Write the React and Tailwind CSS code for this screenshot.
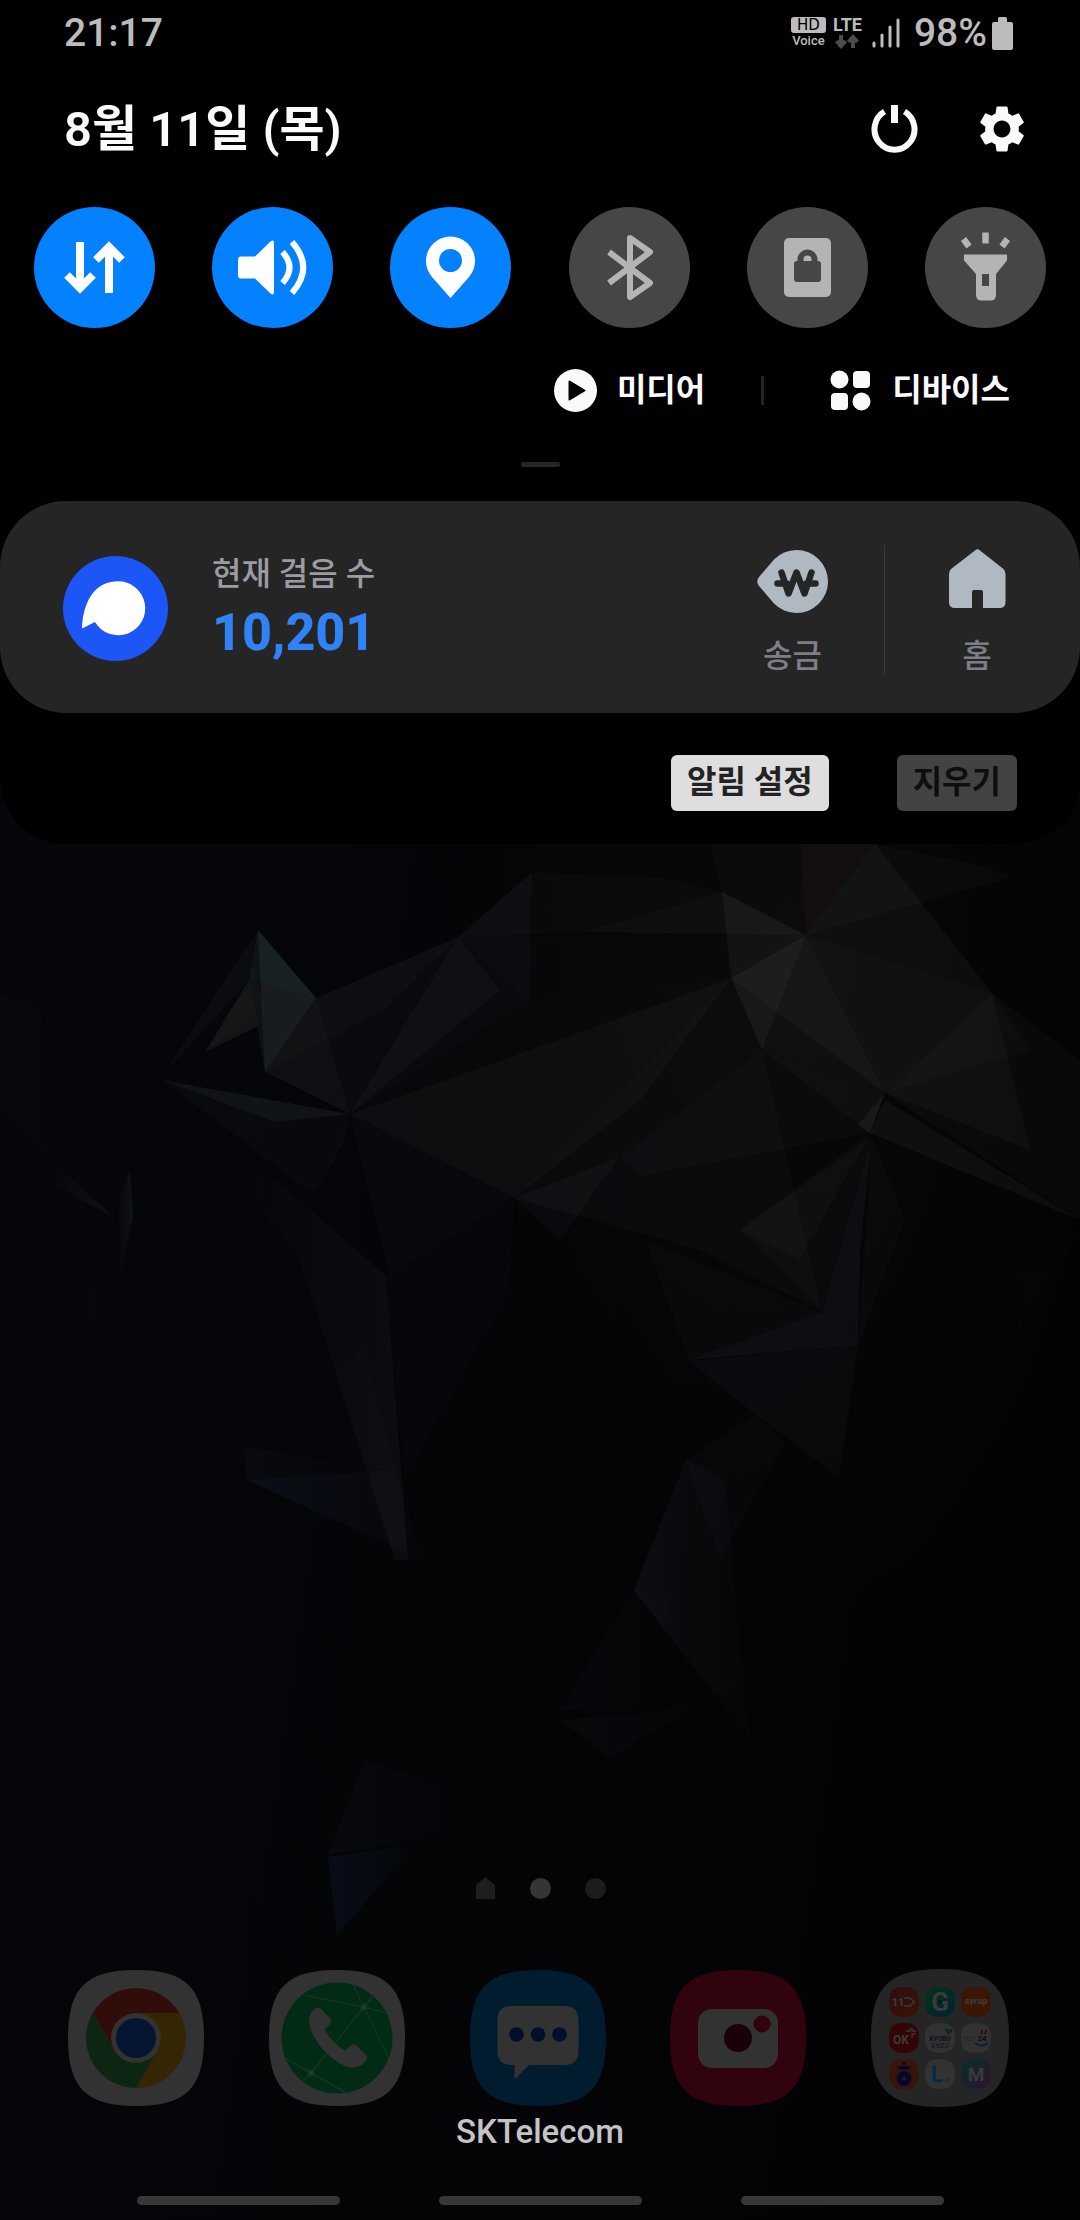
import React from "react";
import { MdSettings } from "react-icons/md";

const SQUIRCLE = "M68 0C119 0 136 19 136 68S119 136 68 136 0 117 0 68 17 0 68 0z";

/* Faceted low-poly background: [points, fill, opacity] in a 1080x2220 space */
const FACETS = [
  ["258,930 316,998 265,1072", "#5a7f88", 0.14],
  ["258,930 249,980 316,998", "#6f9296", 0.12],
  ["249,980 316,998 265,1072 258,1030", "#8a8a80", 0.1],
  ["258,930 162,1076 249,980", "#6c7c86", 0.06],
  ["249,980 205,1052 258,1026", "#9a968a", 0.12],
  ["316,998 458,937 350,1114 265,1072", "#7d8488", 0.06],
  ["316,998 458,937 385,1010 265,1072", "#8c8c80", 0.04],
  ["458,937 532,872 530,1000 350,1114", "#7a8694", 0.05],
  ["532,872 665,878 722,892 582,932 458,937", "#6e757e", 0.05],
  ["458,937 806,935 731,978 530,1000", "#5d646e", 0.04],
  ["582,932 722,892 806,935", "#8e8a84", 0.08],
  ["722,892 806,935 762,1050 731,978", "#b0a692", 0.08],
  ["806,935 731,978 762,1050", "#c0b6a4", 0.05],
  ["806,935 885,1093 762,1050", "#a89f88", 0.07],
  ["806,935 731,978 885,1093", "#b8ae98", 0.05],
  ["806,935 875,844 992,993 885,1093", "#8d866f", 0.08],
  ["800,844 875,844 806,935", "#8a6a42", 0.1],
  ["710,844 800,844 806,935 722,892", "#6f7070", 0.05],
  ["875,844 980,865 1013,877 806,935", "#6c7468", 0.06],
  ["806,935 992,993 1030,1050 885,1093", "#777a74", 0.04],
  ["992,993 1080,1060 1080,1220 885,1093", "#7a8088", 0.06],
  ["992,993 1030,1150 885,1093", "#96948c", 0.05],
  ["350,1114 731,978 640,1100 514,1198", "#8b8a80", 0.06],
  ["731,978 762,1050 619,1157 514,1198", "#8b8a80", 0.06],
  ["350,1114 530,1000 731,978", "#7b8288", 0.04],
  ["350,1114 731,978 514,1198", "#80858c", 0.04],
  ["350,1114 458,937 500,990", "#8a9494", 0.06],
  ["162,1080 350,1114 275,1122", "#6d8a90", 0.09],
  ["162,1080 350,1114 314,1195", "#5d6a70", 0.06],
  ["265,1072 316,998 350,1114", "#7f7c70", 0.05],
  ["350,1114 314,1195 345,1140", "#8d9096", 0.06],
  ["350,1114 514,1198 390,1275", "#6b7078", 0.05],
  ["514,1198 390,1275 386,1276 405,1480 510,1290", "#6b7078", 0.03],
  ["619,1157 762,1050 822,1312", "#70757e", 0.05],
  ["514,1198 619,1157 560,1240", "#8a90a0", 0.06],
  ["514,1198 619,1157 822,1312 700,1250", "#7d8290", 0.05],
  ["619,1157 762,1050 870,1133 640,1176", "#767b84", 0.05],
  ["762,1050 885,1093 870,1133", "#a08f70", 0.08],
  ["885,1093 870,1133 858,1125", "#b7b4ac", 0.08],
  ["870,1133 885,1100 1080,1220", "#9a8660", 0.09],
  ["870,1133 800,1260 740,1230", "#8a8474", 0.05],
  ["872,1137 822,1312 858,1345 860,1250", "#8c90a2", 0.08],
  ["872,1137 822,1312 740,1230", "#73767e", 0.05],
  ["872,1137 905,1220 858,1345", "#73767e", 0.05],
  ["822,1312 858,1345 689,1360", "#9298a6", 0.08],
  ["689,1361 858,1345 755,1414", "#5f7390", 0.07],
  ["755,1414 858,1345 839,1478", "#6f7785", 0.06],
  ["645,1240 705,1265 822,1312 689,1360", "#696e7a", 0.05],
  ["755,1414 785,1442 720,1560 686,1460", "#646a78", 0.05],
];

/* Facets that dissolve towards the right edge */
const FADING = [
  ["686,1460 634,1590 750,1740 725,1480", "#7c8496", 0.09],
  ["634,1590 560,1710 640,1712 670,1600", "#5f6678", 0.05],
  ["560,1720 610,1758 755,1670 660,1712", "#5f6678", 0.06],
  ["243,1446 247,1480 380,1470", "#6d7b92", 0.05],
  ["247,1480 422,1560 395,1470", "#46629a", 0.12],
  ["365,1760 328,1855 450,1832 455,1790", "#5a6478", 0.06],
  ["328,1857 415,1845 337,1935", "#26488c", 0.14],
  ["0,995 36,1005 120,1220 0,1110", "#5a6a78", 0.03],
];

/* Facets that dissolve towards the left edge */
const RISING = [
  ["162,1080 386,1276 408,1560 395,1560 300,1260", "#7d848e", 0.08],
  ["243,1446 365,1350 395,1470", "#5f6878", 0.03],
  ["30,1140 112,1216 28,1172", "#507a90", 0.12],
  ["112,1216 130,1170 133,1216 119,1281", "#7a94a0", 0.1],
  ["110,870 225,875 265,1010 162,1080 120,1220", "#5c6470", 0.03],
  ["1080,1232 960,1420 858,1345", "#5c6068", 0.03],
  ["119,1281 0,1310 0,1350 80,1350", "#5c6470", 0.03],
];

function Wallpaper() {
  return (
    <svg className="absolute inset-0 h-full w-full" viewBox="0 0 1080 2220" preserveAspectRatio="xMidYMid slice" aria-hidden="true">
      <defs>
        <linearGradient id="base" x1="0" x2="1" y1="0" y2="0.3">
          <stop offset="0" stopColor="#06070b" />
          <stop offset="1" stopColor="#030305" />
        </linearGradient>
        <radialGradient id="glow" cx="0.74" cy="0.44" r="0.3">
          <stop offset="0" stopColor="#8a7f6c" stopOpacity="0.03" />
          <stop offset="1" stopColor="#8a7f6c" stopOpacity="0" />
        </radialGradient>
        {FADING.map(([, fill, opacity], i) => (
          <linearGradient key={i} id={`fade${i}`}>
            <stop offset="0" stopColor={fill} stopOpacity={opacity} />
            <stop offset="1" stopColor={fill} stopOpacity={opacity / 5} />
          </linearGradient>
        ))}
        {RISING.map(([, fill, opacity], i) => (
          <linearGradient key={i} id={`rise${i}`}>
            <stop offset="0.2" stopColor={fill} stopOpacity="0" />
            <stop offset="1" stopColor={fill} stopOpacity={opacity} />
          </linearGradient>
        ))}
      </defs>
      <rect width="1080" height="2220" fill="url(#base)" />
      <rect width="1080" height="2220" fill="url(#glow)" />
      <g opacity="0.85">
        {FACETS.map(([points, fill, opacity]) => (
          <polygon key={points} points={points} fill={fill} fillOpacity={opacity} />
        ))}
        {FADING.map(([points], i) => (
          <polygon key={points} points={points} fill={`url(#fade${i})`} />
        ))}
        {RISING.map(([points], i) => (
          <polygon key={points} points={points} fill={`url(#rise${i})`} />
        ))}
      </g>
    </svg>
  );
}

function StatusBar() {
  return (
    <header className="flex items-center justify-between pt-3 pr-[67px] pl-16 text-[#bcbcbc]">
      <span className="text-[39px] leading-[42px] font-medium">21:17</span>
      <div className="flex items-center">
        <div className="flex flex-col items-center">
          <span className="w-[35px] rounded-[3px] bg-[#bcbcbc] text-center font-['DejaVu_Sans'] text-[15px] leading-[16px] text-black">HD</span>
          <span className="text-[13px] leading-[16px] font-medium">Voice</span>
        </div>
        <div className="ml-[7px] flex flex-col items-center">
          <span className="text-[18px] leading-[16px] font-bold">LTE</span>
          <svg width="24" height="16" viewBox="0 0 24 16" fill="none" stroke="#4c4c4c" strokeWidth="4" aria-hidden="true">
            <path d="M6 2v11M1.500 8l4.500 5 4.500-5M18 15V4M13.500 9l4.500-5 4.500 5" />
          </svg>
        </div>
        <svg className="ml-[10px]" width="28" height="32" viewBox="0 0 28 32" stroke="#bcbcbc" strokeWidth="3" strokeLinecap="round" aria-hidden="true">
          <path d="M2 26v3M10 18v11M18 10v19M26 3v26" />
        </svg>
        <span className="ml-[14px] text-[39px] leading-[42px] font-medium">98%</span>
        <svg className="ml-[5px]" width="21" height="33" viewBox="0 0 21 33" fill="#bcbcbc" aria-label="배터리" role="img">
          <path d="M6 1.500Q6 0 7.500 0h6Q15 0 15 1.500V5h4q2 0 2 2v24q0 2-2 2H2q-2 0-2-2V7q0-2 2-2h4z" />
        </svg>
      </div>
    </header>
  );
}

const TOGGLES = [
  {
    name: "모바일 데이터",
    on: true,
    icon: (
      <path d="M46 35v46M33 68l13 13 13-13M75 86V40M62 53l13-13 13 13" fill="none" stroke="white" strokeWidth="8" />
    ),
  },
  {
    name: "소리",
    on: true,
    icon: (
      <>
        <path d="M29 49.500h14L58.500 34.500Q62 32 62 36v49q0 4-3.500 1.500L43 71.500H29q-3 0-3-3v-16q0-3 3-3z" fill="white" />
        <path d="M70.500 45Q84.500 60.500 70.500 76M80 35Q102.500 60.500 80 86" fill="none" stroke="white" strokeWidth="6" />
      </>
    ),
  },
  {
    name: "위치",
    on: true,
    icon: (
      <path fillRule="evenodd" fill="white" d="M60.500 91L42 70A24.500 24.500 0 1 1 79 70zM60.500 42a11.500 11.500 0 1 0 0 23 11.500 11.500 0 0 0 0-23z" />
    ),
  },
  {
    name: "블루투스",
    on: false,
    icon: (
      <path d="M40 45L81 76 61 90V31L81 45 40 76" fill="none" stroke="#b4b4b4" strokeWidth="6" strokeLinejoin="round" />
    ),
  },
  {
    name: "화면 회전 잠금",
    on: false,
    icon: (
      <>
        <rect x="37" y="31" width="47" height="59" rx="5" fill="#b4b4b4" />
        <rect x="47" y="54" width="27" height="21" rx="3" fill="#464646" />
        <path d="M53.500 56v-3.500a7 7 0 0 1 14 0V56" fill="none" stroke="#464646" strokeWidth="6" />
      </>
    ),
  },
  {
    name: "손전등",
    on: false,
    icon: (
      <>
        <path fillRule="evenodd" fill="#b4b4b4" d="M39 47.500h43v6L71 67v21q0 5.500-5.500 5.500h-9q-5.500 0-5.500-5.500V67L39 53.500zM57 67v12h7V67z" />
        <path d="M60.500 25.500v11M38.500 32l5.500 7.500M82.500 32L77 39.500" stroke="#b4b4b4" strokeWidth="6.500" />
      </>
    ),
  },
];

function QuickToggle({ name, on, icon }) {
  return (
    <button type="button" aria-label={name} aria-pressed={on} className={on ? "rounded-full bg-[#0381fe]" : "rounded-full bg-[#464646]"}>
      <svg width="121" height="121" viewBox="0 0 121 121" aria-hidden="true">{icon}</svg>
    </button>
  );
}

function QuickPanel() {
  return (
    <section className="text-[#fafafa]">
      <div className="flex items-center justify-between pt-[38px] pr-[50px] pl-16">
        <h1 className="pt-[2px] text-[49px] leading-[72px] font-semibold">8월 11일 (목)</h1>
        <div className="flex items-center gap-[56px]">
          <button type="button" aria-label="전원">
            <svg width="47" height="48" viewBox="0 0 47 48" fill="none" stroke="currentColor" strokeWidth="6" aria-hidden="true">
              <path d="M13.500 6.500A20 20.500 0 1 0 33.500 6.500" />
              <path d="M23.500 0v18" strokeWidth="7" />
            </svg>
          </button>
          <button type="button" aria-label="설정">
            <MdSettings size={56} />
          </button>
        </div>
      </div>
      <div className="flex justify-between px-[34px] pt-[41px]">
        {TOGGLES.map((t) => (
          <QuickToggle key={t.name} {...t} />
        ))}
      </div>
      <div className="flex items-center justify-end pt-10 pr-[70px] text-[32px] leading-[44px] font-semibold">
        <button type="button" className="flex items-center gap-5">
          <svg width="43" height="43" viewBox="0 0 43 43" aria-hidden="true">
            <circle cx="21.500" cy="21.500" r="21.500" fill="#fafafa" />
            <path d="M15.500 12.500v18L30.500 21.500z" fill="#000" stroke="#000" strokeWidth="2" strokeLinejoin="round" />
          </svg>
          미디어
        </button>
        <span className="mr-[66px] ml-[56px] h-[29px] w-[3px] bg-[#242424]" />
        <button type="button" className="flex items-center gap-[21px]">
          <svg width="41" height="41" viewBox="0 0 41 41" fill="#fafafa" aria-hidden="true">
            <circle cx="9.500" cy="9.500" r="9" />
            <rect x="23" y="1" width="17" height="17" rx="4" />
            <rect x="1" y="23" width="17" height="17" rx="4" />
            <circle cx="31.500" cy="31.500" r="9" />
          </svg>
          디바이스
        </button>
      </div>
      <div className="flex justify-center pt-[50px] pb-[34px]">
        <span className="h-[5px] w-[39px] rounded-full bg-[#262626]" />
      </div>
    </section>
  );
}

function Notification() {
  return (
    <article className="flex items-start rounded-[66px] bg-[#252525] pt-11 pr-[11px] pb-[38px] pl-[63px]">
      <svg className="mt-[11px]" width="105" height="105" viewBox="0 0 105 105" aria-hidden="true">
        <circle cx="52.500" cy="52.500" r="52.500" fill="#1c56f6" />
        <path fill="white" d="M54 25.300A27 27 0 1 1 32 66L19 72.500C20 48 30 26 54 25.300z" />
      </svg>
      <div className="ml-11 flex-1 pt-[10px]">
        <p className="text-[32px] leading-[38px] font-medium text-[#9c9ba2]">현재 걸음 수</p>
        <p className="mt-[9px] text-[52px] leading-[62px] font-extrabold text-[#3182f6]">10,201</p>
      </div>
      <button type="button" className="flex w-[184px] flex-col items-center border-r border-[#3b3b3f] pt-[5px] text-[32px] leading-[38px] font-medium text-[#7e7e87]">
        <svg width="72" height="63" viewBox="0 0 72 63" aria-hidden="true">
          <path fill="#b0b8c1" d="M2 27L17 9.500A31.500 31.500 0 1 1 17 53.500L2 36Q-1.500 31.500 2 27z" />
          <path d="M24.500 22.500l7 21 8-21 8 21 7-21M20.500 33.500h9M49.500 33.500h9" fill="none" stroke="#252525" strokeWidth="6.500" strokeLinecap="round" strokeLinejoin="round" />
        </svg>
        <span className="mt-6">송금</span>
      </button>
      <button type="button" className="flex w-[184px] flex-col items-center pt-[4px] text-[32px] leading-[38px] font-medium text-[#7e7e87]">
        <svg width="57" height="64" viewBox="0 0 57 64" aria-hidden="true">
          <path fill="#b0b8c1" d="M26 1.500q2.500-2.500 5 0L54.500 20q2 2 2 5v28q0 6-6 6H34V43q0-2-2-2h-7q-2 0-2 2v16H6q-6 0-6-6V25q0-3 2-5z" />
        </svg>
        <span className="mt-6">홈</span>
      </button>
    </article>
  );
}

function PanelActions() {
  return (
    <div className="flex justify-end gap-[68px] pt-[42px] pr-[63px] pb-[33px] text-[32px] leading-[40px] font-bold">
      <button type="button" className="rounded-[6px] bg-[#dedede] px-4 pt-[7px] pb-[9px] text-[#222222]">알림 설정</button>
      <button type="button" className="rounded-[6px] bg-[#434343] px-4 pt-[7px] pb-[9px] text-[#0e0e0e]">지우기</button>
    </div>
  );
}

function ChromeIcon() {
  return (
    <>
      <path d={SQUIRCLE} fill="#323232" />
      <path fill="#310d0a" d="M24.700 43A50 50 0 0 1 111.300 43H68L46.300 80.500z" />
      <path fill="#342503" d="M68 43H111.300A50 50 0 0 1 68 118L89.600 80.500z" />
      <path fill="#0d2613" d="M24.700 43L46.300 80.500 68 84 89.600 80.500 68 118A50 50 0 0 1 24.700 43z" />
      <circle cx="68" cy="68" r="25" fill="#323232" />
      <circle cx="68" cy="68" r="20" fill="#051633" />
    </>
  );
}

function PhoneIcon() {
  return (
    <>
      <path d={SQUIRCLE} fill="#323232" />
      <circle cx="68" cy="68" r="55.500" fill="#022b16" />
      <g stroke="#143422" strokeWidth="1.500" fill="#1f3d2c">
        <path d="M34 25l61 12 22 6M95 37L84 14M95 37l10-12M95 37L42 103l-9 9M95 37l24 50M42 103L16 88M42 103l34 19" fill="none" />
        <circle cx="95" cy="37" r="3" />
        <circle cx="42" cy="103" r="3" />
      </g>
      <path fill="#323232" d="M45.500 39Q49 36 52.500 39.500L62 49.500Q63 52 60.500 54.500L56 59.500C59 67 68 76 76 80.500L82 75.500Q85 73.500 88 76L97 84.500Q99 87 97.500 89.500C93 98 83 99 75 95.500 59 88 41 68 40 51Q40 43 45.500 39z" />
    </>
  );
}

function MessageIcon() {
  return (
    <>
      <path d={SQUIRCLE} fill="#011c2e" />
      <path fill="#323232" d="M41.500 36h53Q108.500 36 108.500 50v31Q108.500 95 94.500 95H59L44.500 109.500V95h-3Q27.500 95 27.500 81V50Q27.500 36 41.500 36z" />
      <g fill="#01102a">
        <circle cx="46.500" cy="64.500" r="7.300" />
        <circle cx="68" cy="64.500" r="7.300" />
        <circle cx="89.500" cy="64.500" r="7.300" />
      </g>
    </>
  );
}

function CameraIcon() {
  return (
    <>
      <path d={SQUIRCLE} fill="#30030f" />
      <rect x="28" y="39" width="80" height="59" rx="14" fill="#323232" />
      <circle cx="68" cy="68" r="14" fill="#1a0007" />
      <circle cx="92" cy="54" r="8.500" fill="#30030f" />
    </>
  );
}

function MiniApp({ col, row, fill, children }) {
  return (
    <g transform={`translate(${18 + col * 36} ${18 + row * 36})`}>
      <path d={SQUIRCLE} transform="scale(0.22)" fill={fill} />
      {children}
    </g>
  );
}

function FolderIcon() {
  return (
    <g fontFamily="Roboto, sans-serif" fontWeight="700" textAnchor="middle">
      <defs>
        <linearGradient id="mint" x1="0" x2="1" y1="0" y2="1">
          <stop offset="0.2" stopColor="#03301a" />
          <stop offset="1" stopColor="#012133" />
        </linearGradient>
        <linearGradient id="violet" x1="0" x2="1" y1="0" y2="1">
          <stop offset="0.2" stopColor="#0e2a2a" />
          <stop offset="1" stopColor="#2c1230" />
        </linearGradient>
        <linearGradient id="coral" x1="0" x2="1" y1="0" y2="1">
          <stop offset="0" stopColor="#300c14" />
          <stop offset="1" stopColor="#381404" />
        </linearGradient>
      </defs>
      <path d={SQUIRCLE} transform="scale(1.015)" fill="#252525" />
      <MiniApp col={0} row={0} fill="url(#coral)">
        <text x="9" y="19" fontSize="11" fill="#3a3a3a">11</text>
        <path d="M15 11h6l4.500 4-4.500 4h-6" fill="none" stroke="#3a3a3a" strokeWidth="1.500" />
      </MiniApp>
      <MiniApp col={1} row={0} fill="url(#mint)">
        <text x="15" y="24" fontSize="26" fill="#3a3a3a">G</text>
        <circle cx="15.500" cy="15" r="1.800" fill="#05102c" />
      </MiniApp>
      <MiniApp col={2} row={0} fill="#391704">
        <text x="15" y="17" fontSize="9" fill="#4a3a30">syrup</text>
      </MiniApp>
      <MiniApp col={0} row={1} fill="#330507">
        <text x="12" y="21" fontSize="12" fill="#3a3a3a">OK</text>
        <path d="M17 8h4V5M23 5v3h4M23 15v-4h4" fill="none" stroke="#3a3a3a" strokeWidth="1.300" />
      </MiniApp>
      <MiniApp col={1} row={1} fill="#323232">
        <text x="15" y="18" fontSize="6.500" fill="#0a1024">KYOBO</text>
        <text x="15" y="24" fontSize="5" fill="#15151a" fontFamily="'Noto Sans CJK KR', sans-serif">교보문고</text>
        <path d="M20 5q4 3 8 0-1 6-5 6-3-1-3-6z" fill="#0c2c12" />
      </MiniApp>
      <MiniApp col={2} row={1} fill="#323232">
        <text x="8" y="18" fontSize="6.500" fill="#242424" fontWeight="400">YES</text>
        <text x="21" y="18" fontSize="8" fill="#101014">24</text>
        <path d="M20 11l1-4M24 11l1-4" stroke="#34070a" strokeWidth="1.800" />
        <path d="M14 20q6 5 13 0" fill="none" stroke="#062038" strokeWidth="1.800" />
      </MiniApp>
      <MiniApp col={0} row={2} fill="#38150a">
        <circle cx="15" cy="19.500" r="7.500" fill="#06082a" />
        <path d="M8 7h14q-2 4-7 4t-7-4z" fill="#06082a" />
        <circle cx="15" cy="4.500" r="1.800" fill="#06082a" />
        <circle cx="15" cy="19.500" r="1.800" fill="#38150a" />
      </MiniApp>
      <MiniApp col={1} row={2} fill="#323232">
        <text x="12" y="23" fontSize="22" fill="#062a42">L</text>
        <circle cx="22" cy="21" r="2" fill="#33290a" />
      </MiniApp>
      <MiniApp col={2} row={2} fill="url(#violet)">
        <text x="15" y="22" fontSize="19" fill="#3a3a3a">M</text>
      </MiniApp>
    </g>
  );
}

const APPS = [
  ["Chrome", <ChromeIcon />],
  ["전화", <PhoneIcon />],
  ["메시지", <MessageIcon />],
  ["카메라", <CameraIcon />],
];

function Dock() {
  return (
    <footer className="mt-auto pb-[15px]">
      <div className="flex items-center justify-center gap-[34px]" aria-hidden="true">
        <svg width="21" height="22" viewBox="0 0 21 22">
          <path d="M1 8L10.500 0 20 8v14H1z" fill="#1e1e1e" />
        </svg>
        <span className="h-[21px] w-[21px] rounded-full bg-[#353535]" />
        <span className="h-[21px] w-[21px] rounded-full bg-[#1b1c1e]" />
      </div>
      <nav className="flex items-center justify-between pt-[70px] pr-[71px] pl-[68px]">
        {APPS.map(([name, icon]) => (
          <button type="button" key={name} aria-label={name}>
            <svg width="136" height="136" viewBox="0 0 136 136" aria-hidden="true">{icon}</svg>
          </button>
        ))}
        <button type="button" aria-label="쇼핑 폴더">
          <svg width="138" height="138" viewBox="0 0 138 138" aria-hidden="true">
            <FolderIcon />
          </svg>
        </button>
      </nav>
      <p className="pt-[5px] text-center text-[33px] leading-[40px] font-medium text-[#c4c4c6]">SKTelecom</p>
      <div className="flex justify-center gap-[99px] pt-[44px]">
        <button type="button" aria-label="최근 앱" className="h-[9px] w-[203px] rounded-full bg-[#373739]" />
        <button type="button" aria-label="홈 화면" className="h-[9px] w-[203px] rounded-full bg-[#373739]" />
        <button type="button" aria-label="뒤로" className="h-[9px] w-[203px] rounded-full bg-[#373739]" />
      </div>
    </footer>
  );
}

export default function App() {
  return (
    <div className="relative isolate min-h-screen font-[Roboto,'Noto_Sans_CJK_KR',sans-serif]">
      <Wallpaper />
      <main className="relative flex min-h-screen flex-col">
        <div className="rounded-b-[66px] bg-black">
          <StatusBar />
          <QuickPanel />
          <Notification />
          <PanelActions />
        </div>
        <Dock />
      </main>
    </div>
  );
}
